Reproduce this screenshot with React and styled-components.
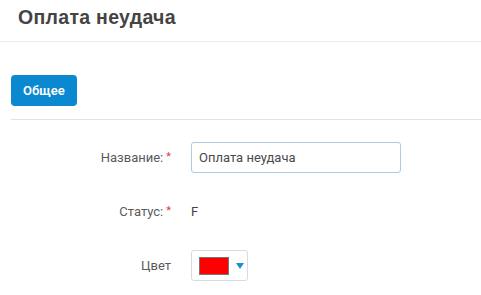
import React from 'react';
import styled, { createGlobalStyle } from 'styled-components';

const GlobalStyle = createGlobalStyle`
    body {
        margin: 0;
        font-family: 'Roboto', 'Liberation Sans', Arial, sans-serif;
        background: #fff;
    }
`

const Header = styled.div`
    height: 41px;
    padding: 0 18px;
    border-bottom: 1px solid #e9ecef;
    display: flex;
    align-items: center;
`

const Title = styled.h1`
    margin: 0 0 7px 0;
    font-family: 'Liberation Sans', Arial, sans-serif;
    font-weight: 700;
    font-size: 19.5px;
    color: #444;
    letter-spacing: 0.3px;
`

const TabBar = styled.div`
    margin-left: 11px;
    padding: 33px 0 13px;
    border-bottom: 1px solid #dde4ec;
    display: flex;
`

const TabButton = styled.button`
    height: 31px;
    padding: 0 12px;
    border: none;
    border-radius: 4px;
    background-color: #0a89d0;
    color: #fff;
    font-family: 'Roboto', 'Liberation Sans', sans-serif;
    font-weight: 600;
    font-size: 13px;
    cursor: pointer;
`

const Form = styled.div`
    padding: 22px 11px 0;
    display: flex;
    flex-direction: column;
    gap: 23px;
`

const Row = styled.div`
    display: grid;
    grid-template-columns: 160px 1fr;
    column-gap: 20px;
    align-items: center;
    min-height: 31px;
`

const Label = styled.label`
    text-align: right;
    font-size: 13px;
    color: #5a5a5a;
`

const Required = styled.span`
    color: #e53935;
    font-size: 11px;
    margin-left: 3px;
    vertical-align: 2px;
`

const TextInput = styled.input`
    box-sizing: border-box;
    width: 210px;
    height: 31px;
    padding: 0 7px;
    border: 1px solid #a9cde2;
    border-radius: 3px;
    font-family: 'Roboto', 'Liberation Sans', sans-serif;
    font-size: 13px;
    color: #4a4a4a;
    background: #fff;
    outline: none;
`

const Value = styled.span`
    font-size: 13px;
    color: #444;
`

const ColorPicker = styled.div`
    box-sizing: border-box;
    width: 57px;
    height: 31px;
    border: 1px solid #d3dbe3;
    border-radius: 3px;
    background: #fff;
    display: flex;
    align-items: center;
    padding-left: 7px;
    gap: 7px;
`

const Swatch = styled.span`
    box-sizing: border-box;
    width: 30px;
    height: 18px;
    border: 1px solid #777;
    background: ${props => props.color};
`

const Arrow = styled.span`
    width: 0;
    height: 0;
    border-left: 4px solid transparent;
    border-right: 4px solid transparent;
    border-top: 6px solid #1a8dd3;
`

const App = () => {
    return (
        <>
            <GlobalStyle />
            <Header>
                <Title>Оплата неудача</Title>
            </Header>
            <TabBar>
                <TabButton>Общее</TabButton>
            </TabBar>
            <Form>
                <Row>
                    <Label>Название:<Required>*</Required></Label>
                    <div>
                        <TextInput defaultValue="Оплата неудача" />
                    </div>
                </Row>
                <Row>
                    <Label>Статус:<Required>*</Required></Label>
                    <Value>F</Value>
                </Row>
                <Row>
                    <Label>Цвет</Label>
                    <div>
                        <ColorPicker>
                            <Swatch color="#ff0000" />
                            <Arrow />
                        </ColorPicker>
                    </div>
                </Row>
            </Form>
        </>
    )
}

export default App;
